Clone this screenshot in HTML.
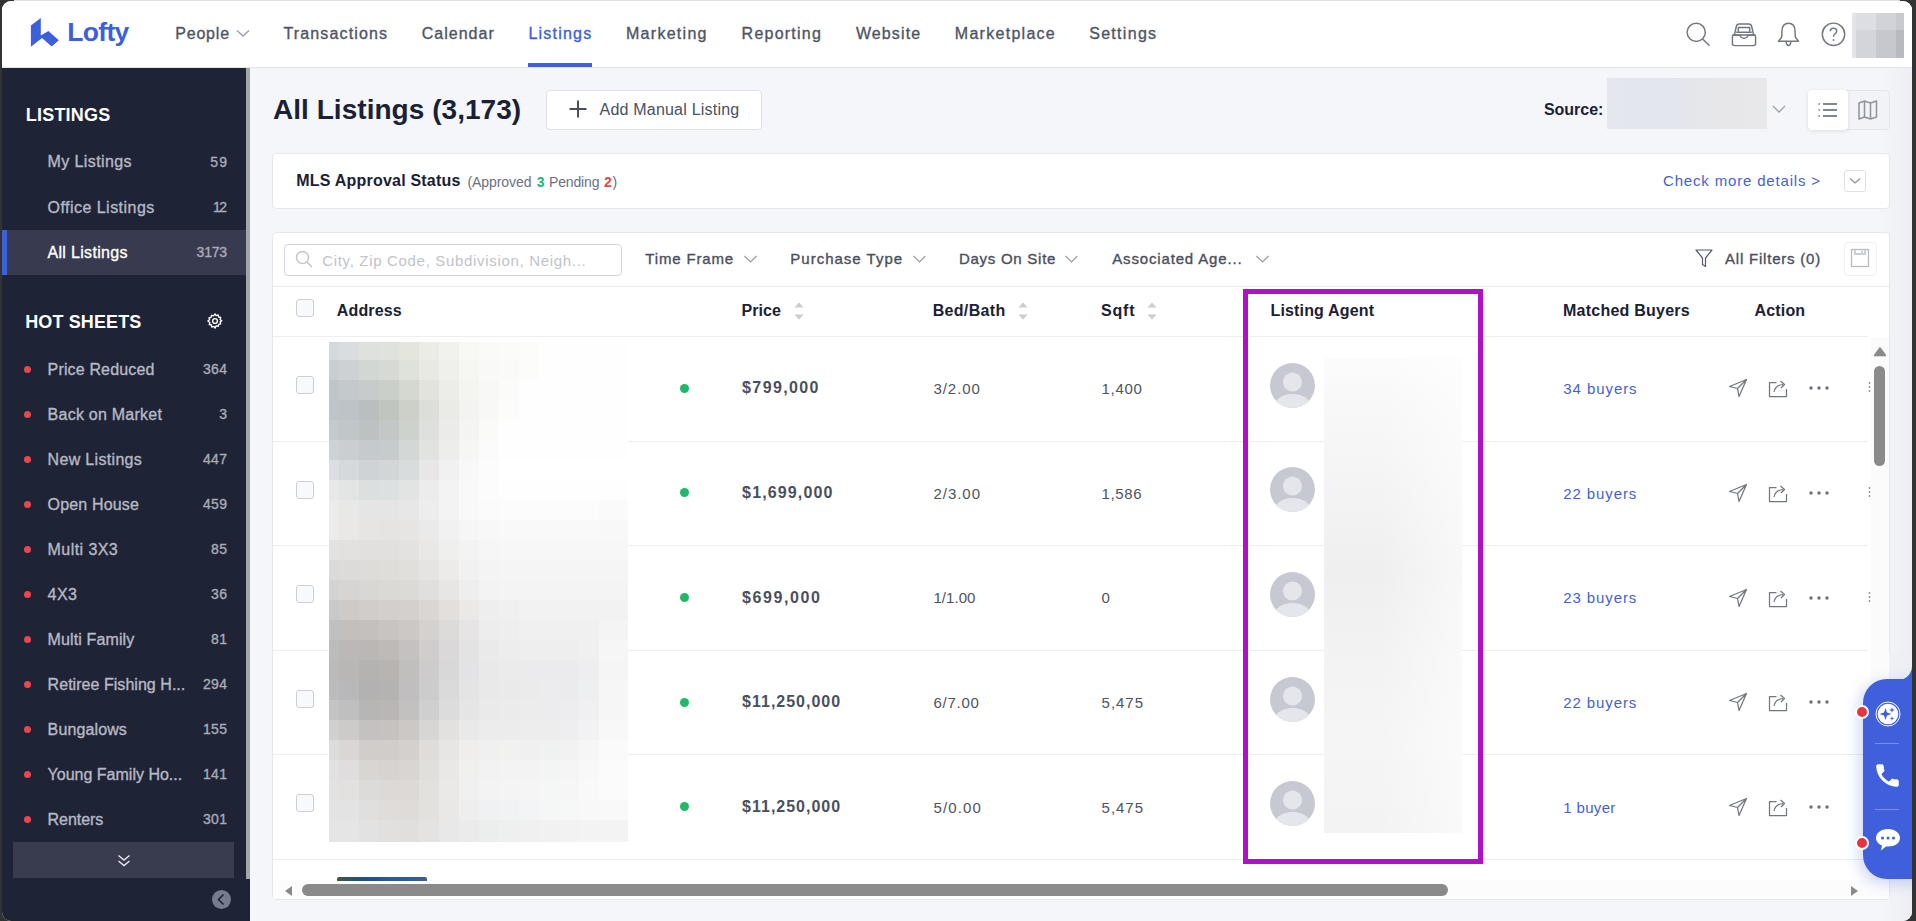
<!DOCTYPE html><html><head><meta charset="utf-8"><style>
*{box-sizing:border-box;margin:0;padding:0}
html,body{width:1916px;height:921px;overflow:hidden;background:#e2e2e2;font-family:"Liberation Sans",sans-serif}
.abs{position:absolute}
.t{position:absolute;white-space:nowrap}
</style></head><body>
<div class="abs" style="left:0;top:0;width:3px;height:921px;background:#333"></div>
<div class="abs" style="left:1911px;top:0;width:5px;height:921px;background:#333"></div>
<div class="abs" style="left:0;top:0;width:14px;height:14px;background:#333"></div>
<div class="abs" style="left:1900px;top:0;width:16px;height:14px;background:#333"></div>
<div class="abs" style="left:0;top:905px;width:14px;height:16px;background:#333"></div>
<div class="abs" style="left:1900px;top:905px;width:16px;height:16px;background:#333"></div>
<div class="abs" style="left:2px;top:1px;width:1910px;height:920px;border-radius:9px;overflow:hidden;background:#f5f6fa"><div class="abs" style="left:-2px;top:-1px;width:1916px;height:921px">
<div class="abs" style="left:0;top:0;width:1916px;height:68px;background:#fff;border-bottom:1px solid #e4e6ec"></div>
<svg class="abs" style="left:30px;top:17px" width="30" height="31" viewBox="0 0 30 31"><path d="M0.9 8.5 L10.8 0.9 L10.8 18.5 L18.4 13.9 L28.8 23.3 L21.7 29.6 L12 21 L0.9 29.8 Z" fill="#3c5fdb"/></svg>
<div class="t" style="left:67.3px;top:19.4px;font-size:26.5px;line-height:26.5px;color:#3c5fdb;font-weight:bold;letter-spacing:-0.69px;">Lofty</div>
<div class="t" style="left:175.2px;top:26.1px;font-size:16px;line-height:16px;color:#4f5565;letter-spacing:0.82px;-webkit-text-stroke:0.35px #4f5565;">People</div>
<div class="t" style="left:283.4px;top:26.1px;font-size:16px;line-height:16px;color:#4f5565;letter-spacing:1.15px;-webkit-text-stroke:0.35px #4f5565;">Transactions</div>
<div class="t" style="left:421.8px;top:26.1px;font-size:16px;line-height:16px;color:#4f5565;letter-spacing:1.00px;-webkit-text-stroke:0.35px #4f5565;">Calendar</div>
<div class="t" style="left:528.4px;top:26.1px;font-size:16px;line-height:16px;color:#3c5fdb;letter-spacing:1.22px;-webkit-text-stroke:0.35px #3c5fdb;">Listings</div>
<div class="t" style="left:626.0px;top:26.1px;font-size:16px;line-height:16px;color:#4f5565;letter-spacing:1.28px;-webkit-text-stroke:0.35px #4f5565;">Marketing</div>
<div class="t" style="left:741.6px;top:26.1px;font-size:16px;line-height:16px;color:#4f5565;letter-spacing:1.23px;-webkit-text-stroke:0.35px #4f5565;">Reporting</div>
<div class="t" style="left:855.9px;top:26.1px;font-size:16px;line-height:16px;color:#4f5565;letter-spacing:1.12px;-webkit-text-stroke:0.35px #4f5565;">Website</div>
<div class="t" style="left:954.8px;top:26.1px;font-size:16px;line-height:16px;color:#4f5565;letter-spacing:1.28px;-webkit-text-stroke:0.35px #4f5565;">Marketplace</div>
<div class="t" style="left:1089.2px;top:26.1px;font-size:16px;line-height:16px;color:#4f5565;letter-spacing:1.30px;-webkit-text-stroke:0.35px #4f5565;">Settings</div>
<svg class="abs" style="left:235px;top:27.5px" width="16" height="10" viewBox="0 0 16 10"><path d="M2 2.5 L8 8 L14 2.5" stroke="#9ca1ad" stroke-width="1.5" fill="none"/></svg>
<div class="abs" style="left:528px;top:63px;width:64px;height:4px;background:#3c5fdb"></div>
<div class="abs" style="left:0;top:68px;width:246px;height:853px;background:#1f2336"></div>
<div class="abs" style="left:246px;top:68px;width:4px;height:853px;background:#1f2336"></div>
<div class="abs" style="left:246px;top:68px;width:4px;height:811px;background:#a4a5a9"></div>
<div class="t" style="left:25.7px;top:105.9px;font-size:18px;line-height:18px;color:#fff;font-weight:bold;letter-spacing:0.23px;">LISTINGS</div>
<div class="abs" style="left:2px;top:230px;width:244px;height:45px;background:#383b4f"></div>
<div class="abs" style="left:2px;top:230px;width:5px;height:45px;background:#3c5fdb"></div>
<div class="t" style="left:47.5px;top:154.3px;font-size:16px;line-height:16px;color:#b6b9c3;letter-spacing:0.40px;-webkit-text-stroke:0.35px #b6b9c3;">My Listings</div>
<div class="t" style="left:210.3px;top:154.6px;font-size:14px;line-height:14px;color:#a9acb6;letter-spacing:1.07px;-webkit-text-stroke:0.35px #a9acb6;">59</div>
<div class="t" style="left:47.5px;top:199.9px;font-size:16px;line-height:16px;color:#b6b9c3;letter-spacing:0.47px;-webkit-text-stroke:0.35px #b6b9c3;">Office Listings</div>
<div class="t" style="left:213.0px;top:200.2px;font-size:14px;line-height:14px;color:#a9acb6;letter-spacing:-1.62px;-webkit-text-stroke:0.35px #a9acb6;">12</div>
<div class="t" style="left:47.5px;top:244.8px;font-size:16px;line-height:16px;color:#fff;letter-spacing:0.32px;-webkit-text-stroke:0.35px #fff;">All Listings</div>
<div class="t" style="left:196.6px;top:245.1px;font-size:14px;line-height:14px;color:#a9acb6;letter-spacing:-0.24px;-webkit-text-stroke:0.35px #a9acb6;">3173</div>
<div class="t" style="left:25.2px;top:312.5px;font-size:18px;line-height:18px;color:#fff;font-weight:bold;letter-spacing:0.13px;">HOT SHEETS</div>
<svg class="abs" style="left:206px;top:312px" width="18" height="18" viewBox="0 0 24 24" fill="none" stroke="#fff" stroke-width="1.8"><circle cx="12" cy="12" r="3.2"/><path d="M12 2.5l1.6 2.3 2.7-.8.6 2.7 2.7.6-.8 2.7 2.3 1.6-2.3 1.6.8 2.7-2.7.6-.6 2.7-2.7-.8L12 21.5l-1.6-2.3-2.7.8-.6-2.7-2.7-.6.8-2.7L2.5 12l2.3-1.6-.8-2.7 2.7-.6.6-2.7 2.7.8z" stroke-linejoin="round"/></svg>
<div class="abs" style="left:24px;top:365.6px;width:7px;height:7px;border-radius:50%;background:#e8474e"></div>
<div class="t" style="left:47.6px;top:361.6px;font-size:16px;line-height:16px;color:#b6b9c3;letter-spacing:0.15px;-webkit-text-stroke:0.35px #b6b9c3;">Price Reduced</div>
<div class="t" style="left:202.9px;top:362.1px;font-size:14px;line-height:14px;color:#a9acb6;letter-spacing:0.36px;-webkit-text-stroke:0.35px #a9acb6;">364</div>
<div class="abs" style="left:24px;top:410.6px;width:7px;height:7px;border-radius:50%;background:#e8474e"></div>
<div class="t" style="left:47.6px;top:406.6px;font-size:16px;line-height:16px;color:#b6b9c3;letter-spacing:0.24px;-webkit-text-stroke:0.35px #b6b9c3;">Back on Market</div>
<div class="t" style="left:219.3px;top:407.1px;font-size:14px;line-height:14px;color:#a9acb6;-webkit-text-stroke:0.35px #a9acb6;">3</div>
<div class="abs" style="left:24px;top:455.6px;width:7px;height:7px;border-radius:50%;background:#e8474e"></div>
<div class="t" style="left:47.6px;top:451.6px;font-size:16px;line-height:16px;color:#b6b9c3;letter-spacing:0.32px;-webkit-text-stroke:0.35px #b6b9c3;">New Listings</div>
<div class="t" style="left:202.9px;top:452.1px;font-size:14px;line-height:14px;color:#a9acb6;letter-spacing:0.36px;-webkit-text-stroke:0.35px #a9acb6;">447</div>
<div class="abs" style="left:24px;top:500.6px;width:7px;height:7px;border-radius:50%;background:#e8474e"></div>
<div class="t" style="left:47.6px;top:496.6px;font-size:16px;line-height:16px;color:#b6b9c3;letter-spacing:0.15px;-webkit-text-stroke:0.35px #b6b9c3;">Open House</div>
<div class="t" style="left:202.9px;top:497.1px;font-size:14px;line-height:14px;color:#a9acb6;letter-spacing:0.36px;-webkit-text-stroke:0.35px #a9acb6;">459</div>
<div class="abs" style="left:24px;top:545.6px;width:7px;height:7px;border-radius:50%;background:#e8474e"></div>
<div class="t" style="left:47.6px;top:541.6px;font-size:16px;line-height:16px;color:#b6b9c3;letter-spacing:0.43px;-webkit-text-stroke:0.35px #b6b9c3;">Multi 3X3</div>
<div class="t" style="left:211.1px;top:542.1px;font-size:14px;line-height:14px;color:#a9acb6;letter-spacing:0.27px;-webkit-text-stroke:0.35px #a9acb6;">85</div>
<div class="abs" style="left:24px;top:590.6px;width:7px;height:7px;border-radius:50%;background:#e8474e"></div>
<div class="t" style="left:47.6px;top:586.6px;font-size:16px;line-height:16px;color:#b6b9c3;letter-spacing:0.40px;-webkit-text-stroke:0.35px #b6b9c3;">4X3</div>
<div class="t" style="left:211.1px;top:587.1px;font-size:14px;line-height:14px;color:#a9acb6;letter-spacing:0.27px;-webkit-text-stroke:0.35px #a9acb6;">36</div>
<div class="abs" style="left:24px;top:635.6px;width:7px;height:7px;border-radius:50%;background:#e8474e"></div>
<div class="t" style="left:47.6px;top:631.6px;font-size:16px;line-height:16px;color:#b6b9c3;letter-spacing:0.12px;-webkit-text-stroke:0.35px #b6b9c3;">Multi Family</div>
<div class="t" style="left:211.1px;top:632.1px;font-size:14px;line-height:14px;color:#a9acb6;letter-spacing:0.27px;-webkit-text-stroke:0.35px #a9acb6;">81</div>
<div class="abs" style="left:24px;top:680.6px;width:7px;height:7px;border-radius:50%;background:#e8474e"></div>
<div class="t" style="left:47.6px;top:676.6px;font-size:16px;line-height:16px;color:#b6b9c3;letter-spacing:0.04px;-webkit-text-stroke:0.35px #b6b9c3;">Retiree Fishing H...</div>
<div class="t" style="left:202.9px;top:677.1px;font-size:14px;line-height:14px;color:#a9acb6;letter-spacing:0.36px;-webkit-text-stroke:0.35px #a9acb6;">294</div>
<div class="abs" style="left:24px;top:725.6px;width:7px;height:7px;border-radius:50%;background:#e8474e"></div>
<div class="t" style="left:47.6px;top:721.6px;font-size:16px;line-height:16px;color:#b6b9c3;letter-spacing:0.12px;-webkit-text-stroke:0.35px #b6b9c3;">Bungalows</div>
<div class="t" style="left:202.9px;top:722.1px;font-size:14px;line-height:14px;color:#a9acb6;letter-spacing:0.36px;-webkit-text-stroke:0.35px #a9acb6;">155</div>
<div class="abs" style="left:24px;top:770.6px;width:7px;height:7px;border-radius:50%;background:#e8474e"></div>
<div class="t" style="left:47.6px;top:766.6px;font-size:16px;line-height:16px;color:#b6b9c3;-webkit-text-stroke:0.35px #b6b9c3;">Young Family Ho...</div>
<div class="t" style="left:202.9px;top:767.1px;font-size:14px;line-height:14px;color:#a9acb6;letter-spacing:0.36px;-webkit-text-stroke:0.35px #a9acb6;">141</div>
<div class="abs" style="left:24px;top:815.6px;width:7px;height:7px;border-radius:50%;background:#e8474e"></div>
<div class="t" style="left:47.6px;top:811.6px;font-size:16px;line-height:16px;color:#b6b9c3;letter-spacing:-0.05px;-webkit-text-stroke:0.35px #b6b9c3;">Renters</div>
<div class="t" style="left:202.9px;top:812.1px;font-size:14px;line-height:14px;color:#a9acb6;letter-spacing:0.36px;-webkit-text-stroke:0.35px #a9acb6;">301</div>
<div class="abs" style="left:13px;top:842px;width:221px;height:36px;background:#393c4f"></div>
<svg class="abs" style="left:116px;top:853px" width="16" height="16" viewBox="0 0 16 16" fill="none" stroke="#e8e9ee" stroke-width="1.4"><path d="M2.5 2.5 L8 7 L13.5 2.5"/><path d="M2.5 8 L8 12.5 L13.5 8"/></svg>
<div class="abs" style="left:212px;top:890px;width:19px;height:19px;border-radius:50%;background:#767c90"></div>
<svg class="abs" style="left:212px;top:890px" width="19" height="19" viewBox="0 0 19 19" fill="none" stroke="#1f2336" stroke-width="1.6"><path d="M11.5 4.5 L6.5 9.5 L11.5 14.5"/></svg>
<svg class="abs" style="left:1684px;top:20px" width="28" height="28" viewBox="0 0 28 28" fill="none" stroke="#74777f" stroke-width="1.45"><circle cx="12.2" cy="12.3" r="9.1"/><path d="M18.6 18.9 L25.6 25.7"/></svg>
<svg class="abs" style="left:1730px;top:20px" width="28" height="28" viewBox="0 0 28 28" fill="none" stroke="#74777f" stroke-width="1.45" stroke-linejoin="round"><path d="M4.3 15.3 L6.3 6.5 Q6.8 4 9.2 4 L18.8 4 Q21.2 4 21.7 6.5 L23.7 15.3"/><path d="M8.3 11.8 V7.4 H19.7 V11.8"/><path d="M6.2 12.3 H21.8"/><rect x="2.4" y="15" width="23.2" height="10.6" rx="2"/><path d="M2.4 15 H10 Q10.4 18.2 14 18.2 Q17.6 18.2 18 15 H25.6"/></svg>
<svg class="abs" style="left:1774px;top:20px" width="28" height="28" viewBox="0 0 28 28" fill="none" stroke="#74777f" stroke-width="1.45" stroke-linejoin="round"><path d="M14.5 3.2 Q20.6 3.2 21 10.5 L21.3 17 L24.5 21.2 L4.5 21.2 L7.7 17 L8 10.5 Q8.4 3.2 14.5 3.2 Z"/><path d="M12.2 21.6 Q12.4 25.4 14.5 25.4 Q16.6 25.4 16.8 21.6"/></svg>
<svg class="abs" style="left:1819px;top:20px" width="28" height="28" viewBox="0 0 28 28" fill="none" stroke="#74777f" stroke-width="1.45"><circle cx="14.5" cy="14.3" r="11.2"/><path d="M11.3 11.3 Q11.3 8.2 14.5 8.2 Q17.7 8.2 17.7 11.1 Q17.7 12.9 15.8 14 Q14.5 14.8 14.5 16.7"/><circle cx="14.5" cy="20" r="0.9" fill="#74777f" stroke="none"/></svg>
<div class="abs" style="left:1852px;top:13px;width:52px;height:45px;background:#dcdee3"></div>
<div class="abs" style="left:1852px;top:13px;width:4px;height:45px;background:#e4e5e9"></div>
<div class="abs" style="left:1876px;top:13px;width:20px;height:17px;background:#d1d3d9"></div>
<div class="abs" style="left:1856px;top:30px;width:20px;height:28px;background:#d3d5da"></div>
<div class="abs" style="left:1876px;top:30px;width:20px;height:28px;background:#c6c8ce"></div>
<div class="abs" style="left:1896px;top:13px;width:8px;height:17px;background:#c8cad0"></div>
<div class="abs" style="left:1896px;top:30px;width:8px;height:28px;background:#b8bac2"></div>
<div class="abs" style="left:1880px;top:68px;width:32px;height:853px;background:linear-gradient(90deg,#f5f6fa 0%,#f0f1f5 60%,#eceef3 100%)"></div>
<div class="t" style="left:273.0px;top:96.2px;font-size:28px;line-height:28px;color:#1b2134;font-weight:bold;letter-spacing:0.04px;">All Listings (3,173)</div>
<div class="abs" style="left:546px;top:90px;width:216px;height:40px;background:#fff;border:1px solid #dfe1e6;border-radius:4px"></div>
<svg class="abs" style="left:568px;top:99px" width="20" height="20" viewBox="0 0 20 20" stroke="#4a5060" stroke-width="2"><path d="M10 1.5 V18.5 M1.5 10 H18.5"/></svg>
<div class="t" style="left:599.5px;top:101.6px;font-size:16px;line-height:16px;color:#4a5060;letter-spacing:0.21px;">Add Manual Listing</div>
<div class="t" style="left:1543.9px;top:101.7px;font-size:16px;line-height:16px;color:#1b2134;font-weight:bold;letter-spacing:-0.02px;">Source:</div>
<div class="abs" style="left:1607px;top:78px;width:160px;height:51px;background:linear-gradient(90deg,#e4e7ed 0%,#e2e6ed 40%,#e7e7ea 70%,#e8e8ea 100%)"></div>
<svg class="abs" style="left:1771px;top:103px" width="16" height="12" viewBox="0 0 16 12" fill="none" stroke="#9ca0aa" stroke-width="1.3"><path d="M2 3 L8 9 L14 3"/></svg>
<div class="abs" style="left:1808px;top:90px;width:82px;height:40px;background:#f2f3f6;border:1px solid #e3e5ea;border-radius:4px"></div>
<div class="abs" style="left:1808px;top:90px;width:40px;height:40px;background:#fff;border-radius:4px;box-shadow:0 1px 4px rgba(0,0,0,0.10)"></div>
<svg class="abs" style="left:1816px;top:100px" width="24" height="20" viewBox="0 0 24 20" stroke="#5a5f6b" stroke-width="1.7"><path d="M2.5 4 H3.8 M2.5 10 H3.8 M2.5 16 H3.8 M7 4 H21 M7 10 H21 M7 16 H21"/></svg>
<svg class="abs" style="left:1856px;top:98px" width="24" height="24" viewBox="0 0 24 24" fill="none" stroke="#8f939d" stroke-width="1.5" stroke-linejoin="round"><path d="M3 5 L8.5 3 L14.5 5 L20.5 3 L20.5 19 L14.5 21 L8.5 19 L3 21 Z M8.5 3 V19 M14.5 5 V21"/></svg>
<div class="abs" style="left:272px;top:153px;width:1618px;height:56px;background:#fff;border:1px solid #e5e7ec;border-radius:4px"></div>
<div class="t" style="left:296.3px;top:172.7px;font-size:16px;line-height:16px;color:#1b2134;font-weight:bold;letter-spacing:0.21px;">MLS Approval Status</div>
<div class="t" style="left:467.5px;top:174.6px;font-size:14px;line-height:14px;color:#6b7080;letter-spacing:-0.08px;">(Approved</div>
<div class="t" style="left:536.8px;top:174.6px;font-size:14px;line-height:14px;color:#22b573;font-weight:bold;">3</div>
<div class="t" style="left:549.0px;top:174.6px;font-size:14px;line-height:14px;color:#6b7080;letter-spacing:-0.15px;">Pending</div>
<div class="t" style="left:604.0px;top:174.6px;font-size:14px;line-height:14px;color:#e5484d;font-weight:bold;">2</div>
<div class="t" style="left:612.5px;top:174.6px;font-size:14px;line-height:14px;color:#6b7080;">)</div>
<div class="t" style="left:1663.0px;top:173.3px;font-size:15px;line-height:15px;color:#4462d3;letter-spacing:0.83px;">Check more details ></div>
<div class="abs" style="left:1844px;top:170px;width:22px;height:22px;border:1px solid #dfe1e6;border-radius:3px;background:#fff"></div>
<svg class="abs" style="left:1847px;top:173px" width="16" height="16" viewBox="0 0 16 16" fill="none" stroke="#8f939d" stroke-width="1.3"><path d="M3 5.5 L8 10 L13 5.5"/></svg>
<div class="abs" style="left:272px;top:232px;width:1618px;height:668px;background:#fff;border:1px solid #e5e7ec;border-radius:4px"></div>
<div class="abs" style="left:284px;top:244px;width:338px;height:32px;border:1px solid #d3d6dc;border-radius:4px;background:#fff"></div>
<svg class="abs" style="left:294px;top:249px" width="20" height="20" viewBox="0 0 20 20" fill="none" stroke="#c4c6cc" stroke-width="1.5"><circle cx="8.5" cy="8.5" r="6"/><path d="M13 13 L18 18"/></svg>
<div class="t" style="left:322.2px;top:253.0px;font-size:15px;line-height:15px;color:#c0c3cb;letter-spacing:0.68px;">City, Zip Code, Subdivision, Neigh...</div>
<div class="t" style="left:645.3px;top:251.1px;font-size:15px;line-height:15px;color:#4a4f5e;letter-spacing:0.83px;-webkit-text-stroke:0.35px #4a4f5e;">Time Frame</div>
<svg class="abs" style="left:742.6px;top:254px" width="15" height="10" viewBox="0 0 15 10" fill="none" stroke="#9a9ea8" stroke-width="1.2"><path d="M1.5 2 L7.5 8 L13.5 2"/></svg>
<div class="t" style="left:790.3px;top:251.1px;font-size:15px;line-height:15px;color:#4a4f5e;letter-spacing:1.00px;-webkit-text-stroke:0.35px #4a4f5e;">Purchase Type</div>
<svg class="abs" style="left:911.8px;top:254px" width="15" height="10" viewBox="0 0 15 10" fill="none" stroke="#9a9ea8" stroke-width="1.2"><path d="M1.5 2 L7.5 8 L13.5 2"/></svg>
<div class="t" style="left:958.9px;top:251.1px;font-size:15px;line-height:15px;color:#4a4f5e;letter-spacing:0.74px;-webkit-text-stroke:0.35px #4a4f5e;">Days On Site</div>
<svg class="abs" style="left:1064.4px;top:254px" width="15" height="10" viewBox="0 0 15 10" fill="none" stroke="#9a9ea8" stroke-width="1.2"><path d="M1.5 2 L7.5 8 L13.5 2"/></svg>
<div class="t" style="left:1112.2px;top:251.1px;font-size:15px;line-height:15px;color:#4a4f5e;letter-spacing:0.85px;-webkit-text-stroke:0.35px #4a4f5e;">Associated Age...</div>
<svg class="abs" style="left:1254.9px;top:254px" width="15" height="10" viewBox="0 0 15 10" fill="none" stroke="#9a9ea8" stroke-width="1.2"><path d="M1.5 2 L7.5 8 L13.5 2"/></svg>
<svg class="abs" style="left:1694px;top:248px" width="20" height="20" viewBox="0 0 20 20" fill="none" stroke="#585c66" stroke-width="1.2" stroke-linejoin="round"><path d="M2 2 H18 L11.5 10 V18.5 L8.5 16.5 V10 Z"/></svg>
<div class="t" style="left:1725.0px;top:251.0px;font-size:15px;line-height:15px;color:#4a4f5e;letter-spacing:0.79px;-webkit-text-stroke:0.35px #4a4f5e;">All Filters (0)</div>
<div class="abs" style="left:1844px;top:242px;width:33px;height:34px;border:1px solid #eef0f3;border-radius:4px"></div>
<svg class="abs" style="left:1850px;top:248px" width="20" height="20" viewBox="0 0 20 20" fill="none" stroke="#b9bcc4" stroke-width="1.3"><rect x="1.5" y="1.5" width="17" height="17"/><path d="M5 1.5 V6 H15 V1.5 M12 2.5 V5"/></svg>
<div class="abs" style="left:273px;top:286px;width:1616px;height:1px;background:#e8eaee"></div>
<div class="abs" style="left:273px;top:336px;width:1595px;height:1px;background:#eceef1"></div>
<div class="abs" style="left:296px;top:299px;width:18px;height:18px;border:1px solid #ccd0d6;border-radius:3px;background:#f8f9fb"></div>
<div class="t" style="left:336.8px;top:302.8px;font-size:16px;line-height:16px;color:#1b2134;font-weight:bold;letter-spacing:0.13px;">Address</div>
<div class="t" style="left:741.4px;top:302.8px;font-size:16px;line-height:16px;color:#1b2134;font-weight:bold;letter-spacing:0.07px;">Price</div>
<div class="t" style="left:932.7px;top:302.8px;font-size:16px;line-height:16px;color:#1b2134;font-weight:bold;letter-spacing:0.32px;">Bed/Bath</div>
<div class="t" style="left:1101.0px;top:302.8px;font-size:16px;line-height:16px;color:#1b2134;font-weight:bold;letter-spacing:0.79px;">Sqft</div>
<div class="t" style="left:1270.5px;top:302.8px;font-size:16px;line-height:16px;color:#1b2134;font-weight:bold;letter-spacing:0.16px;">Listing Agent</div>
<div class="t" style="left:1563.0px;top:302.8px;font-size:16px;line-height:16px;color:#1b2134;font-weight:bold;letter-spacing:0.24px;">Matched Buyers</div>
<div class="t" style="left:1754.5px;top:302.8px;font-size:16px;line-height:16px;color:#1b2134;font-weight:bold;letter-spacing:0.17px;">Action</div>
<svg class="abs" style="left:793px;top:301px" width="12" height="20" viewBox="0 0 12 20" fill="#c9ccd2"><path d="M6 1.5 L10.5 6.5 H1.5 Z M6 18.5 L10.5 13.5 H1.5 Z"/></svg>
<svg class="abs" style="left:1017px;top:301px" width="12" height="20" viewBox="0 0 12 20" fill="#c9ccd2"><path d="M6 1.5 L10.5 6.5 H1.5 Z M6 18.5 L10.5 13.5 H1.5 Z"/></svg>
<svg class="abs" style="left:1146px;top:301px" width="12" height="20" viewBox="0 0 12 20" fill="#c9ccd2"><path d="M6 1.5 L10.5 6.5 H1.5 Z M6 18.5 L10.5 13.5 H1.5 Z"/></svg>
<div class="abs" style="left:273px;top:441px;width:1595px;height:1px;background:#eceef1"></div>
<div class="abs" style="left:296px;top:376px;width:18px;height:18px;border:1px solid #ccd0d6;border-radius:3px;background:#f8f9fb"></div>
<div class="abs" style="left:680px;top:383.8px;width:9px;height:9px;border-radius:50%;background:#22b86a"></div>
<div class="t" style="left:742.1px;top:380.3px;font-size:16px;line-height:16px;color:#4a4f5c;font-weight:bold;letter-spacing:1.38px;">$799,000</div>
<div class="t" style="left:933.4px;top:381.1px;font-size:15px;line-height:15px;color:#4f5360;letter-spacing:0.97px;">3/2.00</div>
<div class="t" style="left:1101.6px;top:381.1px;font-size:15px;line-height:15px;color:#4f5360;letter-spacing:0.65px;">1,400</div>
<div class="t" style="left:1563.3px;top:381.1px;font-size:15px;line-height:15px;color:#4462d3;letter-spacing:0.93px;">34 buyers</div>
<svg class="abs" style="left:1270px;top:362.8px" width="45" height="45" viewBox="0 0 45 45"><defs><clipPath id="ac0"><circle cx="22.5" cy="22.5" r="22.5"/></clipPath></defs><circle cx="22.5" cy="22.5" r="22.5" fill="#c6c9d1"/><g clip-path="url(#ac0)" fill="#e4e6eb"><circle cx="22.5" cy="19" r="9.5"/><ellipse cx="22.5" cy="45" rx="19" ry="14"/></g></svg>
<svg class="abs" style="left:1728px;top:378.3px" width="20" height="20" viewBox="0 0 20 20" fill="none" stroke="#72767f" stroke-width="1.25" stroke-linejoin="round"><path d="M1.5 8.5 L18.5 1.5 L11 18.5 L9.5 10.5 Z M9.5 10.5 L18.5 1.5"/></svg>
<svg class="abs" style="left:1768px;top:378.3px" width="20" height="20" viewBox="0 0 20 20" fill="none" stroke="#72767f" stroke-width="1.25" stroke-linejoin="round"><path d="M8.5 4.5 H1.5 V18.5 H18.5 V11"/><path d="M6 14 Q7 7.5 15 6.5 M12.5 3 L16.5 6.5 L13 10"/></svg>
<svg class="abs" style="left:1808px;top:385.3px" width="22" height="6" viewBox="0 0 22 6" fill="#6a6e78"><circle cx="3" cy="3" r="1.7"/><circle cx="11" cy="3" r="1.7"/><circle cx="19" cy="3" r="1.7"/></svg><svg class="abs" style="left:1868px;top:381.3px" width="3" height="12" viewBox="0 0 3 12" fill="#8a8d95"><circle cx="1.5" cy="2" r="0.9"/><circle cx="1.5" cy="6" r="0.9"/><circle cx="1.5" cy="10" r="0.9"/></svg>
<div class="abs" style="left:273px;top:545px;width:1595px;height:1px;background:#eceef1"></div>
<div class="abs" style="left:296px;top:481px;width:18px;height:18px;border:1px solid #ccd0d6;border-radius:3px;background:#f8f9fb"></div>
<div class="abs" style="left:680px;top:488.4px;width:9px;height:9px;border-radius:50%;background:#22b86a"></div>
<div class="t" style="left:742.1px;top:484.9px;font-size:16px;line-height:16px;color:#4a4f5c;font-weight:bold;letter-spacing:1.14px;">$1,699,000</div>
<div class="t" style="left:933.4px;top:485.7px;font-size:15px;line-height:15px;color:#4f5360;letter-spacing:0.99px;">2/3.00</div>
<div class="t" style="left:1101.6px;top:485.7px;font-size:15px;line-height:15px;color:#4f5360;letter-spacing:0.60px;">1,586</div>
<div class="t" style="left:1563.3px;top:485.7px;font-size:15px;line-height:15px;color:#4462d3;letter-spacing:0.89px;">22 buyers</div>
<svg class="abs" style="left:1270px;top:467.4px" width="45" height="45" viewBox="0 0 45 45"><defs><clipPath id="ac1"><circle cx="22.5" cy="22.5" r="22.5"/></clipPath></defs><circle cx="22.5" cy="22.5" r="22.5" fill="#c6c9d1"/><g clip-path="url(#ac1)" fill="#e4e6eb"><circle cx="22.5" cy="19" r="9.5"/><ellipse cx="22.5" cy="45" rx="19" ry="14"/></g></svg>
<svg class="abs" style="left:1728px;top:482.9px" width="20" height="20" viewBox="0 0 20 20" fill="none" stroke="#72767f" stroke-width="1.25" stroke-linejoin="round"><path d="M1.5 8.5 L18.5 1.5 L11 18.5 L9.5 10.5 Z M9.5 10.5 L18.5 1.5"/></svg>
<svg class="abs" style="left:1768px;top:482.9px" width="20" height="20" viewBox="0 0 20 20" fill="none" stroke="#72767f" stroke-width="1.25" stroke-linejoin="round"><path d="M8.5 4.5 H1.5 V18.5 H18.5 V11"/><path d="M6 14 Q7 7.5 15 6.5 M12.5 3 L16.5 6.5 L13 10"/></svg>
<svg class="abs" style="left:1808px;top:489.9px" width="22" height="6" viewBox="0 0 22 6" fill="#6a6e78"><circle cx="3" cy="3" r="1.7"/><circle cx="11" cy="3" r="1.7"/><circle cx="19" cy="3" r="1.7"/></svg><svg class="abs" style="left:1868px;top:485.9px" width="3" height="12" viewBox="0 0 3 12" fill="#8a8d95"><circle cx="1.5" cy="2" r="0.9"/><circle cx="1.5" cy="6" r="0.9"/><circle cx="1.5" cy="10" r="0.9"/></svg>
<div class="abs" style="left:273px;top:650px;width:1595px;height:1px;background:#eceef1"></div>
<div class="abs" style="left:296px;top:585px;width:18px;height:18px;border:1px solid #ccd0d6;border-radius:3px;background:#f8f9fb"></div>
<div class="abs" style="left:680px;top:593.0px;width:9px;height:9px;border-radius:50%;background:#22b86a"></div>
<div class="t" style="left:742.1px;top:589.5px;font-size:16px;line-height:16px;color:#4a4f5c;font-weight:bold;letter-spacing:1.59px;">$699,000</div>
<div class="t" style="left:933.4px;top:590.3px;font-size:15px;line-height:15px;color:#4f5360;letter-spacing:0.07px;">1/1.00</div>
<div class="t" style="left:1101.6px;top:590.3px;font-size:15px;line-height:15px;color:#4f5360;">0</div>
<div class="t" style="left:1563.3px;top:590.3px;font-size:15px;line-height:15px;color:#4462d3;letter-spacing:0.89px;">23 buyers</div>
<svg class="abs" style="left:1270px;top:572.0px" width="45" height="45" viewBox="0 0 45 45"><defs><clipPath id="ac2"><circle cx="22.5" cy="22.5" r="22.5"/></clipPath></defs><circle cx="22.5" cy="22.5" r="22.5" fill="#c6c9d1"/><g clip-path="url(#ac2)" fill="#e4e6eb"><circle cx="22.5" cy="19" r="9.5"/><ellipse cx="22.5" cy="45" rx="19" ry="14"/></g></svg>
<svg class="abs" style="left:1728px;top:587.5px" width="20" height="20" viewBox="0 0 20 20" fill="none" stroke="#72767f" stroke-width="1.25" stroke-linejoin="round"><path d="M1.5 8.5 L18.5 1.5 L11 18.5 L9.5 10.5 Z M9.5 10.5 L18.5 1.5"/></svg>
<svg class="abs" style="left:1768px;top:587.5px" width="20" height="20" viewBox="0 0 20 20" fill="none" stroke="#72767f" stroke-width="1.25" stroke-linejoin="round"><path d="M8.5 4.5 H1.5 V18.5 H18.5 V11"/><path d="M6 14 Q7 7.5 15 6.5 M12.5 3 L16.5 6.5 L13 10"/></svg>
<svg class="abs" style="left:1808px;top:594.5px" width="22" height="6" viewBox="0 0 22 6" fill="#6a6e78"><circle cx="3" cy="3" r="1.7"/><circle cx="11" cy="3" r="1.7"/><circle cx="19" cy="3" r="1.7"/></svg><svg class="abs" style="left:1868px;top:590.5px" width="3" height="12" viewBox="0 0 3 12" fill="#8a8d95"><circle cx="1.5" cy="2" r="0.9"/><circle cx="1.5" cy="6" r="0.9"/><circle cx="1.5" cy="10" r="0.9"/></svg>
<div class="abs" style="left:273px;top:754px;width:1595px;height:1px;background:#eceef1"></div>
<div class="abs" style="left:296px;top:690px;width:18px;height:18px;border:1px solid #ccd0d6;border-radius:3px;background:#f8f9fb"></div>
<div class="abs" style="left:680px;top:697.6px;width:9px;height:9px;border-radius:50%;background:#22b86a"></div>
<div class="t" style="left:742.1px;top:694.1px;font-size:16px;line-height:16px;color:#4a4f5c;font-weight:bold;letter-spacing:0.99px;">$11,250,000</div>
<div class="t" style="left:933.4px;top:694.9px;font-size:15px;line-height:15px;color:#4f5360;letter-spacing:0.77px;">6/7.00</div>
<div class="t" style="left:1101.6px;top:694.9px;font-size:15px;line-height:15px;color:#4f5360;letter-spacing:0.97px;">5,475</div>
<div class="t" style="left:1563.3px;top:694.9px;font-size:15px;line-height:15px;color:#4462d3;letter-spacing:0.89px;">22 buyers</div>
<svg class="abs" style="left:1270px;top:676.6px" width="45" height="45" viewBox="0 0 45 45"><defs><clipPath id="ac3"><circle cx="22.5" cy="22.5" r="22.5"/></clipPath></defs><circle cx="22.5" cy="22.5" r="22.5" fill="#c6c9d1"/><g clip-path="url(#ac3)" fill="#e4e6eb"><circle cx="22.5" cy="19" r="9.5"/><ellipse cx="22.5" cy="45" rx="19" ry="14"/></g></svg>
<svg class="abs" style="left:1728px;top:692.1px" width="20" height="20" viewBox="0 0 20 20" fill="none" stroke="#72767f" stroke-width="1.25" stroke-linejoin="round"><path d="M1.5 8.5 L18.5 1.5 L11 18.5 L9.5 10.5 Z M9.5 10.5 L18.5 1.5"/></svg>
<svg class="abs" style="left:1768px;top:692.1px" width="20" height="20" viewBox="0 0 20 20" fill="none" stroke="#72767f" stroke-width="1.25" stroke-linejoin="round"><path d="M8.5 4.5 H1.5 V18.5 H18.5 V11"/><path d="M6 14 Q7 7.5 15 6.5 M12.5 3 L16.5 6.5 L13 10"/></svg>
<svg class="abs" style="left:1808px;top:699.1px" width="22" height="6" viewBox="0 0 22 6" fill="#6a6e78"><circle cx="3" cy="3" r="1.7"/><circle cx="11" cy="3" r="1.7"/><circle cx="19" cy="3" r="1.7"/></svg><svg class="abs" style="left:1868px;top:695.1px" width="3" height="12" viewBox="0 0 3 12" fill="#8a8d95"><circle cx="1.5" cy="2" r="0.9"/><circle cx="1.5" cy="6" r="0.9"/><circle cx="1.5" cy="10" r="0.9"/></svg>
<div class="abs" style="left:273px;top:859px;width:1595px;height:1px;background:#eceef1"></div>
<div class="abs" style="left:296px;top:794px;width:18px;height:18px;border:1px solid #ccd0d6;border-radius:3px;background:#f8f9fb"></div>
<div class="abs" style="left:680px;top:802.2px;width:9px;height:9px;border-radius:50%;background:#22b86a"></div>
<div class="t" style="left:742.1px;top:798.7px;font-size:16px;line-height:16px;color:#4a4f5c;font-weight:bold;letter-spacing:0.99px;">$11,250,000</div>
<div class="t" style="left:933.4px;top:799.5px;font-size:15px;line-height:15px;color:#4f5360;letter-spacing:1.15px;">5/0.00</div>
<div class="t" style="left:1101.6px;top:799.5px;font-size:15px;line-height:15px;color:#4f5360;letter-spacing:0.97px;">5,475</div>
<div class="t" style="left:1563.3px;top:799.5px;font-size:15px;line-height:15px;color:#4462d3;letter-spacing:0.33px;">1 buyer</div>
<svg class="abs" style="left:1270px;top:781.2px" width="45" height="45" viewBox="0 0 45 45"><defs><clipPath id="ac4"><circle cx="22.5" cy="22.5" r="22.5"/></clipPath></defs><circle cx="22.5" cy="22.5" r="22.5" fill="#c6c9d1"/><g clip-path="url(#ac4)" fill="#e4e6eb"><circle cx="22.5" cy="19" r="9.5"/><ellipse cx="22.5" cy="45" rx="19" ry="14"/></g></svg>
<svg class="abs" style="left:1728px;top:796.7px" width="20" height="20" viewBox="0 0 20 20" fill="none" stroke="#72767f" stroke-width="1.25" stroke-linejoin="round"><path d="M1.5 8.5 L18.5 1.5 L11 18.5 L9.5 10.5 Z M9.5 10.5 L18.5 1.5"/></svg>
<svg class="abs" style="left:1768px;top:796.7px" width="20" height="20" viewBox="0 0 20 20" fill="none" stroke="#72767f" stroke-width="1.25" stroke-linejoin="round"><path d="M8.5 4.5 H1.5 V18.5 H18.5 V11"/><path d="M6 14 Q7 7.5 15 6.5 M12.5 3 L16.5 6.5 L13 10"/></svg>
<svg class="abs" style="left:1808px;top:803.7px" width="22" height="6" viewBox="0 0 22 6" fill="#6a6e78"><circle cx="3" cy="3" r="1.7"/><circle cx="11" cy="3" r="1.7"/><circle cx="19" cy="3" r="1.7"/></svg><svg class="abs" style="left:1868px;top:799.7px" width="3" height="12" viewBox="0 0 3 12" fill="#8a8d95"><circle cx="1.5" cy="2" r="0.9"/><circle cx="1.5" cy="6" r="0.9"/><circle cx="1.5" cy="10" r="0.9"/></svg>
<svg class="abs" style="left:329px;top:342px" width="299" height="500" shape-rendering="crispEdges"><rect x="0" y="0" width="10" height="18" fill="#d5d9de"/><rect x="10" y="0" width="20" height="18" fill="#dadddf"/><rect x="30" y="0" width="20" height="18" fill="#dfe1de"/><rect x="50" y="0" width="20" height="18" fill="#e0e2dd"/><rect x="70" y="0" width="20" height="18" fill="#e4e6de"/><rect x="90" y="0" width="20" height="18" fill="#ebece6"/><rect x="110" y="0" width="20" height="18" fill="#f1f2ed"/><rect x="130" y="0" width="20" height="18" fill="#f8f8f5"/><rect x="150" y="0" width="20" height="18" fill="#fafaf8"/><rect x="170" y="0" width="20" height="18" fill="#fbfbfa"/><rect x="190" y="0" width="20" height="18" fill="#fcfcfb"/><rect x="210" y="0" width="20" height="18" fill="#fefefe"/><rect x="230" y="0" width="20" height="18" fill="#fefefe"/><rect x="250" y="0" width="20" height="18" fill="#fefefe"/><rect x="270" y="0" width="20" height="18" fill="#fefefe"/><rect x="290" y="0" width="9" height="18" fill="#fefefe"/><rect x="0" y="18" width="10" height="20" fill="#c9ced3"/><rect x="10" y="18" width="20" height="20" fill="#cdd1d4"/><rect x="30" y="18" width="20" height="20" fill="#d3d7d4"/><rect x="50" y="18" width="20" height="20" fill="#d7dad4"/><rect x="70" y="18" width="20" height="20" fill="#dfe2da"/><rect x="90" y="18" width="20" height="20" fill="#e8e9e3"/><rect x="110" y="18" width="20" height="20" fill="#eff0eb"/><rect x="130" y="18" width="20" height="20" fill="#f6f6f3"/><rect x="150" y="18" width="20" height="20" fill="#f9f9f7"/><rect x="170" y="18" width="20" height="20" fill="#fafaf9"/><rect x="190" y="18" width="20" height="20" fill="#fcfcfb"/><rect x="210" y="18" width="20" height="20" fill="#fefefe"/><rect x="230" y="18" width="20" height="20" fill="#fefefe"/><rect x="250" y="18" width="20" height="20" fill="#fefefe"/><rect x="270" y="18" width="20" height="20" fill="#fefefe"/><rect x="290" y="18" width="9" height="20" fill="#fefefe"/><rect x="0" y="38" width="10" height="20" fill="#c0c5ca"/><rect x="10" y="38" width="20" height="20" fill="#c4c9cc"/><rect x="30" y="38" width="20" height="20" fill="#c7cbca"/><rect x="50" y="38" width="20" height="20" fill="#cbcfc9"/><rect x="70" y="38" width="20" height="20" fill="#d5d8d0"/><rect x="90" y="38" width="20" height="20" fill="#e2e3dd"/><rect x="110" y="38" width="20" height="20" fill="#ecede8"/><rect x="130" y="38" width="20" height="20" fill="#f4f4f1"/><rect x="150" y="38" width="20" height="20" fill="#f8f8f6"/><rect x="170" y="38" width="20" height="20" fill="#fbfbfa"/><rect x="190" y="38" width="20" height="20" fill="#fefefe"/><rect x="210" y="38" width="20" height="20" fill="#fefefe"/><rect x="230" y="38" width="20" height="20" fill="#fefefe"/><rect x="250" y="38" width="20" height="20" fill="#fefefe"/><rect x="270" y="38" width="20" height="20" fill="#fefefe"/><rect x="290" y="38" width="9" height="20" fill="#fefefe"/><rect x="0" y="58" width="10" height="20" fill="#bec4c9"/><rect x="10" y="58" width="20" height="20" fill="#bdc3c6"/><rect x="30" y="58" width="20" height="20" fill="#b9bfbe"/><rect x="50" y="58" width="20" height="20" fill="#c0c5c0"/><rect x="70" y="58" width="20" height="20" fill="#ccd0c9"/><rect x="90" y="58" width="20" height="20" fill="#dcdfd9"/><rect x="110" y="58" width="20" height="20" fill="#eaebe7"/><rect x="130" y="58" width="20" height="20" fill="#f3f3f1"/><rect x="150" y="58" width="20" height="20" fill="#f8f8f6"/><rect x="170" y="58" width="20" height="20" fill="#fcfcfb"/><rect x="190" y="58" width="20" height="20" fill="#fefefe"/><rect x="210" y="58" width="20" height="20" fill="#fefefe"/><rect x="230" y="58" width="20" height="20" fill="#fefefe"/><rect x="250" y="58" width="20" height="20" fill="#fefefe"/><rect x="270" y="58" width="20" height="20" fill="#fefefe"/><rect x="290" y="58" width="9" height="20" fill="#fefefe"/><rect x="0" y="78" width="10" height="20" fill="#c3c9cd"/><rect x="10" y="78" width="20" height="20" fill="#c1c6c9"/><rect x="30" y="78" width="20" height="20" fill="#bcc2c2"/><rect x="50" y="78" width="20" height="20" fill="#c3c8c6"/><rect x="70" y="78" width="20" height="20" fill="#ced2cd"/><rect x="90" y="78" width="20" height="20" fill="#dde0dc"/><rect x="110" y="78" width="20" height="20" fill="#ebece9"/><rect x="130" y="78" width="20" height="20" fill="#f4f4f2"/><rect x="150" y="78" width="20" height="20" fill="#fafaf9"/><rect x="170" y="78" width="20" height="20" fill="#fefefe"/><rect x="190" y="78" width="20" height="20" fill="#fefefe"/><rect x="210" y="78" width="20" height="20" fill="#fefefe"/><rect x="230" y="78" width="20" height="20" fill="#fefefe"/><rect x="250" y="78" width="20" height="20" fill="#fefefe"/><rect x="270" y="78" width="20" height="20" fill="#fefefe"/><rect x="290" y="78" width="9" height="20" fill="#fefefe"/><rect x="0" y="98" width="10" height="20" fill="#ced2d6"/><rect x="10" y="98" width="20" height="20" fill="#caced1"/><rect x="30" y="98" width="20" height="20" fill="#c5cacc"/><rect x="50" y="98" width="20" height="20" fill="#c6cbcc"/><rect x="70" y="98" width="20" height="20" fill="#d3d7d5"/><rect x="90" y="98" width="20" height="20" fill="#e1e3e1"/><rect x="110" y="98" width="20" height="20" fill="#edeeec"/><rect x="130" y="98" width="20" height="20" fill="#f6f6f5"/><rect x="150" y="98" width="20" height="20" fill="#fbfbfb"/><rect x="170" y="98" width="20" height="20" fill="#fefefe"/><rect x="190" y="98" width="20" height="20" fill="#fefefe"/><rect x="210" y="98" width="20" height="20" fill="#fefefe"/><rect x="230" y="98" width="20" height="20" fill="#fefefe"/><rect x="250" y="98" width="20" height="20" fill="#fefefe"/><rect x="270" y="98" width="20" height="20" fill="#fefefe"/><rect x="290" y="98" width="9" height="20" fill="#fefefe"/><rect x="0" y="118" width="10" height="20" fill="#dcdee1"/><rect x="10" y="118" width="20" height="20" fill="#d6d9db"/><rect x="30" y="118" width="20" height="20" fill="#cfd3d5"/><rect x="50" y="118" width="20" height="20" fill="#d2d6d7"/><rect x="70" y="118" width="20" height="20" fill="#d9dcdc"/><rect x="90" y="118" width="20" height="20" fill="#e6e7e6"/><rect x="110" y="118" width="20" height="20" fill="#f0f1f0"/><rect x="130" y="118" width="20" height="20" fill="#f8f8f8"/><rect x="150" y="118" width="20" height="20" fill="#fcfcfc"/><rect x="170" y="118" width="20" height="20" fill="#ffffff"/><rect x="190" y="118" width="20" height="20" fill="#ffffff"/><rect x="210" y="118" width="20" height="20" fill="#ffffff"/><rect x="230" y="118" width="20" height="20" fill="#ffffff"/><rect x="250" y="118" width="20" height="20" fill="#ffffff"/><rect x="270" y="118" width="20" height="20" fill="#ffffff"/><rect x="290" y="118" width="9" height="20" fill="#ffffff"/><rect x="0" y="138" width="10" height="20" fill="#e7e8e9"/><rect x="10" y="138" width="20" height="20" fill="#e3e5e5"/><rect x="30" y="138" width="20" height="20" fill="#dcdfe0"/><rect x="50" y="138" width="20" height="20" fill="#dde0e1"/><rect x="70" y="138" width="20" height="20" fill="#e2e4e4"/><rect x="90" y="138" width="20" height="20" fill="#ebeceb"/><rect x="110" y="138" width="20" height="20" fill="#f3f3f3"/><rect x="130" y="138" width="20" height="20" fill="#f9f9f9"/><rect x="150" y="138" width="20" height="20" fill="#fcfcfc"/><rect x="170" y="138" width="20" height="20" fill="#fefefe"/><rect x="190" y="138" width="20" height="20" fill="#fefefe"/><rect x="210" y="138" width="20" height="20" fill="#fefefe"/><rect x="230" y="138" width="20" height="20" fill="#fefefe"/><rect x="250" y="138" width="20" height="20" fill="#fefefe"/><rect x="270" y="138" width="20" height="20" fill="#fefefe"/><rect x="290" y="138" width="9" height="20" fill="#fefefe"/><rect x="0" y="158" width="10" height="20" fill="#ebebeb"/><rect x="10" y="158" width="20" height="20" fill="#e8e8e7"/><rect x="30" y="158" width="20" height="20" fill="#e5e5e5"/><rect x="50" y="158" width="20" height="20" fill="#e5e5e5"/><rect x="70" y="158" width="20" height="20" fill="#e7e7e7"/><rect x="90" y="158" width="20" height="20" fill="#ecedec"/><rect x="110" y="158" width="20" height="20" fill="#f3f3f3"/><rect x="130" y="158" width="20" height="20" fill="#f9f9f9"/><rect x="150" y="158" width="20" height="20" fill="#fbfbfb"/><rect x="170" y="158" width="20" height="20" fill="#fcfcfc"/><rect x="190" y="158" width="20" height="20" fill="#fcfcfc"/><rect x="210" y="158" width="20" height="20" fill="#fcfcfc"/><rect x="230" y="158" width="20" height="20" fill="#fcfcfc"/><rect x="250" y="158" width="20" height="20" fill="#fcfcfc"/><rect x="270" y="158" width="20" height="20" fill="#fafafa"/><rect x="290" y="158" width="9" height="20" fill="#fafafa"/><rect x="0" y="178" width="10" height="20" fill="#ecebea"/><rect x="10" y="178" width="20" height="20" fill="#e9e8e7"/><rect x="30" y="178" width="20" height="20" fill="#e6e5e4"/><rect x="50" y="178" width="20" height="20" fill="#e5e4e3"/><rect x="70" y="178" width="20" height="20" fill="#e6e5e4"/><rect x="90" y="178" width="20" height="20" fill="#eaeaea"/><rect x="110" y="178" width="20" height="20" fill="#f1f1f1"/><rect x="130" y="178" width="20" height="20" fill="#f6f6f6"/><rect x="150" y="178" width="20" height="20" fill="#f8f8f8"/><rect x="170" y="178" width="20" height="20" fill="#f9f9f9"/><rect x="190" y="178" width="20" height="20" fill="#f9f9f9"/><rect x="210" y="178" width="20" height="20" fill="#f9f9f9"/><rect x="230" y="178" width="20" height="20" fill="#f9f9f9"/><rect x="250" y="178" width="20" height="20" fill="#f9f9f9"/><rect x="270" y="178" width="20" height="20" fill="#f8f8f8"/><rect x="290" y="178" width="9" height="20" fill="#f8f8f8"/><rect x="0" y="198" width="10" height="20" fill="#e3e2e1"/><rect x="10" y="198" width="20" height="20" fill="#e3e1df"/><rect x="30" y="198" width="20" height="20" fill="#e2e0de"/><rect x="50" y="198" width="20" height="20" fill="#e2e0de"/><rect x="70" y="198" width="20" height="20" fill="#e4e2e0"/><rect x="90" y="198" width="20" height="20" fill="#e9e8e7"/><rect x="110" y="198" width="20" height="20" fill="#efefee"/><rect x="130" y="198" width="20" height="20" fill="#f3f3f3"/><rect x="150" y="198" width="20" height="20" fill="#f6f6f6"/><rect x="170" y="198" width="20" height="20" fill="#f7f7f7"/><rect x="190" y="198" width="20" height="20" fill="#f7f7f7"/><rect x="210" y="198" width="20" height="20" fill="#f7f7f7"/><rect x="230" y="198" width="20" height="20" fill="#f7f7f7"/><rect x="250" y="198" width="20" height="20" fill="#f7f7f7"/><rect x="270" y="198" width="20" height="20" fill="#f7f7f7"/><rect x="290" y="198" width="9" height="20" fill="#f7f7f7"/><rect x="0" y="218" width="10" height="20" fill="#dbdad9"/><rect x="10" y="218" width="20" height="20" fill="#dddbd9"/><rect x="30" y="218" width="20" height="20" fill="#dedcd9"/><rect x="50" y="218" width="20" height="20" fill="#dfddda"/><rect x="70" y="218" width="20" height="20" fill="#e1dfdc"/><rect x="90" y="218" width="20" height="20" fill="#e6e4e3"/><rect x="110" y="218" width="20" height="20" fill="#ecebea"/><rect x="130" y="218" width="20" height="20" fill="#f1f1f1"/><rect x="150" y="218" width="20" height="20" fill="#f4f4f4"/><rect x="170" y="218" width="20" height="20" fill="#f5f5f5"/><rect x="190" y="218" width="20" height="20" fill="#f5f5f5"/><rect x="210" y="218" width="20" height="20" fill="#f5f5f5"/><rect x="230" y="218" width="20" height="20" fill="#f5f5f5"/><rect x="250" y="218" width="20" height="20" fill="#f5f5f5"/><rect x="270" y="218" width="20" height="20" fill="#f5f5f5"/><rect x="290" y="218" width="9" height="20" fill="#f5f5f5"/><rect x="0" y="238" width="10" height="20" fill="#d3d3d3"/><rect x="10" y="238" width="20" height="20" fill="#d6d5d3"/><rect x="30" y="238" width="20" height="20" fill="#d9d7d4"/><rect x="50" y="238" width="20" height="20" fill="#dbd9d6"/><rect x="70" y="238" width="20" height="20" fill="#dcdad7"/><rect x="90" y="238" width="20" height="20" fill="#e1dfdd"/><rect x="110" y="238" width="20" height="20" fill="#e8e6e4"/><rect x="130" y="238" width="20" height="20" fill="#efeeee"/><rect x="150" y="238" width="20" height="20" fill="#f3f3f3"/><rect x="170" y="238" width="20" height="20" fill="#f4f4f4"/><rect x="190" y="238" width="20" height="20" fill="#f4f4f4"/><rect x="210" y="238" width="20" height="20" fill="#f4f4f4"/><rect x="230" y="238" width="20" height="20" fill="#f4f4f4"/><rect x="250" y="238" width="20" height="20" fill="#f4f4f4"/><rect x="270" y="238" width="20" height="20" fill="#f4f4f4"/><rect x="290" y="238" width="9" height="20" fill="#f4f4f4"/><rect x="0" y="258" width="10" height="20" fill="#c9c9c9"/><rect x="10" y="258" width="20" height="20" fill="#cdcac7"/><rect x="30" y="258" width="20" height="20" fill="#d0cdca"/><rect x="50" y="258" width="20" height="20" fill="#d2cfcc"/><rect x="70" y="258" width="20" height="20" fill="#d4d0cd"/><rect x="90" y="258" width="20" height="20" fill="#d9d6d4"/><rect x="110" y="258" width="20" height="20" fill="#e2dfdd"/><rect x="130" y="258" width="20" height="20" fill="#ebe8e8"/><rect x="150" y="258" width="20" height="20" fill="#efeeee"/><rect x="170" y="258" width="20" height="20" fill="#f1f0f0"/><rect x="190" y="258" width="20" height="20" fill="#f2f2f2"/><rect x="210" y="258" width="20" height="20" fill="#f2f2f2"/><rect x="230" y="258" width="20" height="20" fill="#f2f2f2"/><rect x="250" y="258" width="20" height="20" fill="#f2f2f2"/><rect x="270" y="258" width="20" height="20" fill="#f2f2f2"/><rect x="290" y="258" width="9" height="20" fill="#f2f2f2"/><rect x="0" y="278" width="10" height="20" fill="#c0c0c0"/><rect x="10" y="278" width="20" height="20" fill="#c2bfbd"/><rect x="30" y="278" width="20" height="20" fill="#c3c0bd"/><rect x="50" y="278" width="20" height="20" fill="#c7c4c1"/><rect x="70" y="278" width="20" height="20" fill="#cbc8c5"/><rect x="90" y="278" width="20" height="20" fill="#d4d1cf"/><rect x="110" y="278" width="20" height="20" fill="#dddada"/><rect x="130" y="278" width="20" height="20" fill="#e6e4e4"/><rect x="150" y="278" width="20" height="20" fill="#ededed"/><rect x="170" y="278" width="20" height="20" fill="#efeeee"/><rect x="190" y="278" width="20" height="20" fill="#f0f0f0"/><rect x="210" y="278" width="20" height="20" fill="#f0f0f0"/><rect x="230" y="278" width="20" height="20" fill="#f0f0f0"/><rect x="250" y="278" width="20" height="20" fill="#f0f0f0"/><rect x="270" y="278" width="20" height="20" fill="#f4f4f4"/><rect x="290" y="278" width="9" height="20" fill="#f4f4f4"/><rect x="0" y="298" width="10" height="20" fill="#bcbcbc"/><rect x="10" y="298" width="20" height="20" fill="#bbb8b7"/><rect x="30" y="298" width="20" height="20" fill="#bab7b5"/><rect x="50" y="298" width="20" height="20" fill="#bdbab8"/><rect x="70" y="298" width="20" height="20" fill="#c4c1c0"/><rect x="90" y="298" width="20" height="20" fill="#d0cdcc"/><rect x="110" y="298" width="20" height="20" fill="#dad8d8"/><rect x="130" y="298" width="20" height="20" fill="#e4e3e4"/><rect x="150" y="298" width="20" height="20" fill="#ebeaea"/><rect x="170" y="298" width="20" height="20" fill="#eeeded"/><rect x="190" y="298" width="20" height="20" fill="#eeeeee"/><rect x="210" y="298" width="20" height="20" fill="#eeeeee"/><rect x="230" y="298" width="20" height="20" fill="#eeeeee"/><rect x="250" y="298" width="20" height="20" fill="#f0f0f0"/><rect x="270" y="298" width="20" height="20" fill="#f6f6f6"/><rect x="290" y="298" width="9" height="20" fill="#f6f6f6"/><rect x="0" y="318" width="10" height="20" fill="#bababa"/><rect x="10" y="318" width="20" height="20" fill="#b8b7b6"/><rect x="30" y="318" width="20" height="20" fill="#b5b3b1"/><rect x="50" y="318" width="20" height="20" fill="#b7b4b2"/><rect x="70" y="318" width="20" height="20" fill="#c1bfbe"/><rect x="90" y="318" width="20" height="20" fill="#cdcbcb"/><rect x="110" y="318" width="20" height="20" fill="#d9d8d9"/><rect x="130" y="318" width="20" height="20" fill="#e3e2e4"/><rect x="150" y="318" width="20" height="20" fill="#e9e9e9"/><rect x="170" y="318" width="20" height="20" fill="#ebebec"/><rect x="190" y="318" width="20" height="20" fill="#ebebed"/><rect x="210" y="318" width="20" height="20" fill="#ebebed"/><rect x="230" y="318" width="20" height="20" fill="#ebebed"/><rect x="250" y="318" width="20" height="20" fill="#eeeef0"/><rect x="270" y="318" width="20" height="20" fill="#f5f5f6"/><rect x="290" y="318" width="9" height="20" fill="#f5f5f6"/><rect x="0" y="338" width="10" height="20" fill="#bcbcbe"/><rect x="10" y="338" width="20" height="20" fill="#b8b7b9"/><rect x="30" y="338" width="20" height="20" fill="#b3b1b1"/><rect x="50" y="338" width="20" height="20" fill="#b5b2b2"/><rect x="70" y="338" width="20" height="20" fill="#c0bebe"/><rect x="90" y="338" width="20" height="20" fill="#cdcccd"/><rect x="110" y="338" width="20" height="20" fill="#dadadb"/><rect x="130" y="338" width="20" height="20" fill="#e4e4e5"/><rect x="150" y="338" width="20" height="20" fill="#e9e9ea"/><rect x="170" y="338" width="20" height="20" fill="#ebeaea"/><rect x="190" y="338" width="20" height="20" fill="#ebebec"/><rect x="210" y="338" width="20" height="20" fill="#ececee"/><rect x="230" y="338" width="20" height="20" fill="#ebebee"/><rect x="250" y="338" width="20" height="20" fill="#eeeff1"/><rect x="270" y="338" width="20" height="20" fill="#f6f6f7"/><rect x="290" y="338" width="9" height="20" fill="#f6f6f7"/><rect x="0" y="358" width="10" height="20" fill="#c4c4c6"/><rect x="10" y="358" width="20" height="20" fill="#c0bfc0"/><rect x="30" y="358" width="20" height="20" fill="#b8b5b5"/><rect x="50" y="358" width="20" height="20" fill="#bab6b5"/><rect x="70" y="358" width="20" height="20" fill="#c3c0c0"/><rect x="90" y="358" width="20" height="20" fill="#d0cfd0"/><rect x="110" y="358" width="20" height="20" fill="#dcdcdd"/><rect x="130" y="358" width="20" height="20" fill="#e5e5e6"/><rect x="150" y="358" width="20" height="20" fill="#eaeaea"/><rect x="170" y="358" width="20" height="20" fill="#ecebeb"/><rect x="190" y="358" width="20" height="20" fill="#ececed"/><rect x="210" y="358" width="20" height="20" fill="#ececee"/><rect x="230" y="358" width="20" height="20" fill="#ededf0"/><rect x="250" y="358" width="20" height="20" fill="#f0f0f3"/><rect x="270" y="358" width="20" height="20" fill="#f6f6f7"/><rect x="290" y="358" width="9" height="20" fill="#f6f6f7"/><rect x="0" y="378" width="10" height="20" fill="#d0d0d1"/><rect x="10" y="378" width="20" height="20" fill="#cdcaca"/><rect x="30" y="378" width="20" height="20" fill="#c5c1c0"/><rect x="50" y="378" width="20" height="20" fill="#c6c2c0"/><rect x="70" y="378" width="20" height="20" fill="#cbc8c6"/><rect x="90" y="378" width="20" height="20" fill="#d8d6d5"/><rect x="110" y="378" width="20" height="20" fill="#e2e1e0"/><rect x="130" y="378" width="20" height="20" fill="#e9e9e9"/><rect x="150" y="378" width="20" height="20" fill="#ececec"/><rect x="170" y="378" width="20" height="20" fill="#edecec"/><rect x="190" y="378" width="20" height="20" fill="#ededed"/><rect x="210" y="378" width="20" height="20" fill="#ededee"/><rect x="230" y="378" width="20" height="20" fill="#eeeef0"/><rect x="250" y="378" width="20" height="20" fill="#f2f2f4"/><rect x="270" y="378" width="20" height="20" fill="#f8f8f8"/><rect x="290" y="378" width="9" height="20" fill="#f8f8f8"/><rect x="0" y="398" width="10" height="20" fill="#dcdcdd"/><rect x="10" y="398" width="20" height="20" fill="#d9d6d5"/><rect x="30" y="398" width="20" height="20" fill="#d0cdcb"/><rect x="50" y="398" width="20" height="20" fill="#d1cdca"/><rect x="70" y="398" width="20" height="20" fill="#d4d0cd"/><rect x="90" y="398" width="20" height="20" fill="#dfdcda"/><rect x="110" y="398" width="20" height="20" fill="#e8e6e5"/><rect x="130" y="398" width="20" height="20" fill="#efeeed"/><rect x="150" y="398" width="20" height="20" fill="#f0f0f0"/><rect x="170" y="398" width="20" height="20" fill="#f1f1f0"/><rect x="190" y="398" width="20" height="20" fill="#f0f0f0"/><rect x="210" y="398" width="20" height="20" fill="#f0f1f1"/><rect x="230" y="398" width="20" height="20" fill="#f2f2f3"/><rect x="250" y="398" width="20" height="20" fill="#f6f6f7"/><rect x="270" y="398" width="20" height="20" fill="#fafafa"/><rect x="290" y="398" width="9" height="20" fill="#fafafa"/><rect x="0" y="418" width="10" height="20" fill="#e1e1e2"/><rect x="10" y="418" width="20" height="20" fill="#dfdddd"/><rect x="30" y="418" width="20" height="20" fill="#d8d5d3"/><rect x="50" y="418" width="20" height="20" fill="#d7d3d0"/><rect x="70" y="418" width="20" height="20" fill="#d8d5d2"/><rect x="90" y="418" width="20" height="20" fill="#e1dfdc"/><rect x="110" y="418" width="20" height="20" fill="#eae8e6"/><rect x="130" y="418" width="20" height="20" fill="#f0f0ef"/><rect x="150" y="418" width="20" height="20" fill="#f2f2f2"/><rect x="170" y="418" width="20" height="20" fill="#f3f3f3"/><rect x="190" y="418" width="20" height="20" fill="#f3f3f3"/><rect x="210" y="418" width="20" height="20" fill="#f3f4f4"/><rect x="230" y="418" width="20" height="20" fill="#f5f5f5"/><rect x="250" y="418" width="20" height="20" fill="#f8f8f8"/><rect x="270" y="418" width="20" height="20" fill="#fbfbfb"/><rect x="290" y="418" width="9" height="20" fill="#fbfbfb"/><rect x="0" y="438" width="10" height="20" fill="#e2e2e3"/><rect x="10" y="438" width="20" height="20" fill="#e2e1e0"/><rect x="30" y="438" width="20" height="20" fill="#dddbd9"/><rect x="50" y="438" width="20" height="20" fill="#dcd9d6"/><rect x="70" y="438" width="20" height="20" fill="#dcd9d6"/><rect x="90" y="438" width="20" height="20" fill="#e3e1de"/><rect x="110" y="438" width="20" height="20" fill="#eae9e7"/><rect x="130" y="438" width="20" height="20" fill="#f0f0f0"/><rect x="150" y="438" width="20" height="20" fill="#f3f3f3"/><rect x="170" y="438" width="20" height="20" fill="#f4f4f4"/><rect x="190" y="438" width="20" height="20" fill="#f5f5f5"/><rect x="210" y="438" width="20" height="20" fill="#f5f6f6"/><rect x="230" y="438" width="20" height="20" fill="#f6f6f7"/><rect x="250" y="438" width="20" height="20" fill="#f9f9f9"/><rect x="270" y="438" width="20" height="20" fill="#fbfbfb"/><rect x="290" y="438" width="9" height="20" fill="#fbfbfb"/><rect x="0" y="458" width="10" height="20" fill="#e3e3e4"/><rect x="10" y="458" width="20" height="20" fill="#e3e3e3"/><rect x="30" y="458" width="20" height="20" fill="#e0dfde"/><rect x="50" y="458" width="20" height="20" fill="#dfdcd9"/><rect x="70" y="458" width="20" height="20" fill="#dedbd8"/><rect x="90" y="458" width="20" height="20" fill="#e3e1de"/><rect x="110" y="458" width="20" height="20" fill="#e9e8e7"/><rect x="130" y="458" width="20" height="20" fill="#eeeeef"/><rect x="150" y="458" width="20" height="20" fill="#f0f1f2"/><rect x="170" y="458" width="20" height="20" fill="#f1f2f4"/><rect x="190" y="458" width="20" height="20" fill="#f3f4f5"/><rect x="210" y="458" width="20" height="20" fill="#f5f6f6"/><rect x="230" y="458" width="20" height="20" fill="#f6f7f7"/><rect x="250" y="458" width="20" height="20" fill="#f8f8f8"/><rect x="270" y="458" width="20" height="20" fill="#f9f9f9"/><rect x="290" y="458" width="9" height="20" fill="#f9f9f9"/><rect x="0" y="478" width="10" height="22" fill="#e5e5e6"/><rect x="10" y="478" width="20" height="22" fill="#e5e5e5"/><rect x="30" y="478" width="20" height="22" fill="#e3e2e2"/><rect x="50" y="478" width="20" height="22" fill="#e1e0df"/><rect x="70" y="478" width="20" height="22" fill="#e1dfdd"/><rect x="90" y="478" width="20" height="22" fill="#e4e3e1"/><rect x="110" y="478" width="20" height="22" fill="#e8e8e8"/><rect x="130" y="478" width="20" height="22" fill="#ebebeb"/><rect x="150" y="478" width="20" height="22" fill="#eceded"/><rect x="170" y="478" width="20" height="22" fill="#eeefef"/><rect x="190" y="478" width="20" height="22" fill="#f0f0f1"/><rect x="210" y="478" width="20" height="22" fill="#f1f1f1"/><rect x="230" y="478" width="20" height="22" fill="#f2f2f2"/><rect x="250" y="478" width="20" height="22" fill="#f3f3f3"/><rect x="270" y="478" width="20" height="22" fill="#f3f3f3"/><rect x="290" y="478" width="9" height="22" fill="#f3f3f3"/></svg>
<div class="abs" style="left:1324px;top:357px;width:138px;height:476px;background:linear-gradient(90deg,rgba(255,255,255,0) 0%,rgba(255,255,255,0) 40%,rgba(255,255,255,0.55) 100%),linear-gradient(180deg,#fcfcfc 0%,#f8f8f8 10%,#f3f3f3 30%,#efefef 45%,#f2f2f2 60%,#f5f5f5 80%,#f3f3f3 100%)"></div>
<div class="abs" style="left:1243px;top:289px;width:240px;height:575px;border:5px solid #b010c8"></div>
<div class="abs" style="left:1871px;top:337px;width:18px;height:543px;background:#fbfbfb"></div>
<svg class="abs" style="left:1873px;top:346px" width="14" height="12" viewBox="0 0 14 12" fill="#8a8a8a" stroke="#8a8a8a" stroke-width="1.5" stroke-linejoin="round"><path d="M7 2 L12.5 9.5 H1.5 Z"/></svg>
<div class="abs" style="left:1874px;top:366px;width:11px;height:100px;border-radius:6px;background:#8a8a8a"></div>
<div class="abs" style="left:273px;top:880px;width:1616px;height:19px;background:#fcfcfd"></div>
<div class="abs" style="left:337px;top:877px;width:90px;height:4px;border-radius:2px 2px 0 0;background:linear-gradient(90deg,#3d5a3a 0%,#1f4f86 30%,#2a5a95 60%,#3a5f90 100%)"></div>
<svg class="abs" style="left:282px;top:884px" width="12" height="14" viewBox="0 0 12 14" fill="#8a8a8a"><path d="M3 7 L10 2 V12 Z"/></svg>
<div class="abs" style="left:302px;top:884px;width:1146px;height:12px;border-radius:6px;background:#8a8a8a"></div>
<svg class="abs" style="left:1849px;top:884px" width="12" height="14" viewBox="0 0 12 14" fill="#8a8a8a"><path d="M9 7 L2 2 V12 Z"/></svg>
<div class="abs" style="left:1898px;top:666px;width:14px;height:14px;background:#3f5fdb"></div>
<div class="abs" style="left:1889px;top:652px;width:23px;height:28px;border-radius:0 0 14px 0;background:linear-gradient(90deg,#f0f1f5 0%,#eceef3 100%)"></div>
<div class="abs" style="left:1863px;top:679px;width:60px;height:200px;border-radius:24px 0 0 24px;background:#3f5fdb;box-shadow:-4px 4px 14px rgba(63,95,219,0.25)"></div>
<div class="abs" style="left:1875px;top:743px;width:24px;height:1px;background:rgba(255,255,255,0.3)"></div>
<div class="abs" style="left:1875px;top:809px;width:24px;height:1px;background:rgba(255,255,255,0.3)"></div>
<svg class="abs" style="left:1875px;top:701px" width="26" height="26" viewBox="0 0 26 26"><circle cx="13" cy="13" r="12" fill="none" stroke="#fff" stroke-width="1"/><circle cx="13" cy="13" r="10.3" fill="#fff"/><path d="M10.5 7 L12 11.5 L16.5 13 L12 14.5 L10.5 19 L9 14.5 L4.5 13 L9 11.5 Z" fill="#3f5fdb"/><path d="M17 6 L17.7 8.3 L20 9 L17.7 9.7 L17 12 L16.3 9.7 L14 9 L16.3 8.3 Z" fill="#3f5fdb"/><path d="M17 15 L17.6 17 L19.5 17.5 L17.6 18 L17 20 L16.4 18 L14.5 17.5 L16.4 17 Z" fill="#3f5fdb"/></svg>
<svg class="abs" style="left:1873px;top:761px" width="29" height="29" viewBox="0 0 24 24" fill="#fff" stroke="#fff" stroke-width="0.6" stroke-linejoin="round"><path d="M6.6 10.8c1.4 2.8 3.8 5.1 6.6 6.6l2.2-2.2c.3-.3.7-.4 1-.2 1.1.4 2.3.6 3.6.6.6 0 1 .4 1 1V20c0 .6-.4 1-1 1C10.6 21 3 13.4 3 4c0-.6.4-1 1-1h3.5c.6 0 1 .4 1 1 0 1.3.2 2.5.6 3.6.1.3 0 .7-.2 1z"/></svg>
<svg class="abs" style="left:1874px;top:827px" width="28" height="26" viewBox="0 0 28 26"><path d="M14 2 C21 2 26 6 26 11 C26 16 21 19.5 14 19.5 L12 19.5 L7 23.5 L8 18.5 C4.5 17 2 14.5 2 11 C2 6 7 2 14 2 Z" fill="#fff"/><circle cx="8.5" cy="11" r="1.5" fill="#3f5fdb"/><circle cx="14" cy="11" r="1.5" fill="#3f5fdb"/><circle cx="19.5" cy="11" r="1.5" fill="#3f5fdb"/></svg>
<div class="abs" style="left:1855px;top:705px;width:14px;height:14px;border-radius:50%;background:#e8343f;border:2px solid #fff"></div>
<div class="abs" style="left:1855px;top:836px;width:14px;height:14px;border-radius:50%;background:#e8343f;border:2px solid #fff"></div>
</div></div></body></html>
